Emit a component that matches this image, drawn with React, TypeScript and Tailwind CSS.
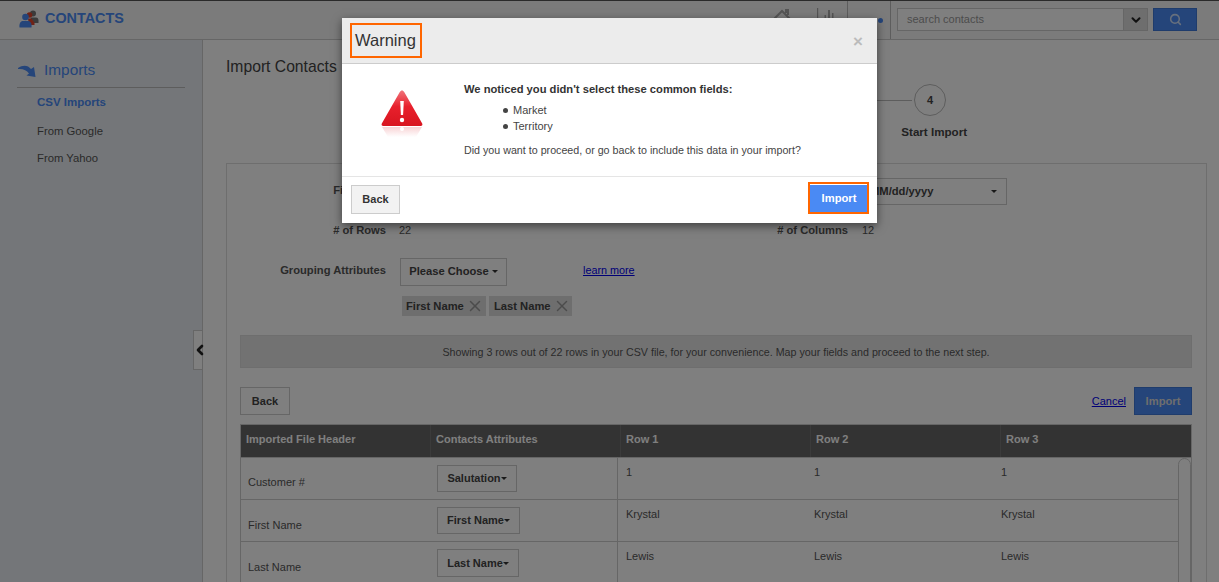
import { ChevronDown, ChevronLeft, Search, X } from "lucide-react";

const rows = [
  { header: "Customer #", attr: "Salutation", width: "w-[80px]", height: "h-[27px]", value: "1", labelTop: "pt-[17px]" },
  { header: "First Name", attr: "First Name", width: "w-[83px]", height: "h-[27px]", value: "Krystal", labelTop: "pt-[18px]" },
  { header: "Last Name", attr: "Last Name", width: "w-[82px]", height: "h-[28px]", value: "Lewis", labelTop: "pt-[18px]" },
];

function Caret() {
  return <span className="inline-block h-0 w-0 border-x-[3px] border-t-[3px] border-x-transparent border-t-[#333]" />;
}

function ContactsLogo() {
  return (
    <svg width="20" height="18" viewBox="0 0 20 18">
      <circle cx="14" cy="3.500" r="3" fill="#777" />
      <path d="M11.500 7.500h5.500c1.500 0 2.500 1 2.500 3v2.500h-5l-2.500-3z" fill="#777" />
      <circle cx="10.500" cy="5" r="2.800" fill="#e0452c" />
      <path d="M9 8.500h3.500l3 4.500v2h-5.500z" fill="#e0452c" />
      <circle cx="6.500" cy="7" r="3.300" fill="#4a8af4" />
      <path d="M0.500 17.500c-0.500-4 1-6.500 3.500-6.500h5c2.500 0 4 2.500 3.500 6.500z" fill="#4a8af4" />
    </svg>
  );
}

function ImportsArrow() {
  return (
    <svg width="19" height="18" viewBox="0 0 19 18">
      <path d="M0 5c5-3.500 10-3 13 1l3-2 1.500 10-9-1.500 2.500-2c-2.500-3.500-6-5-11-4.500z" fill="#4a8af4" />
    </svg>
  );
}

function WarningIcon() {
  return (
    <svg width="42" height="48" viewBox="0 0 42 48">
      <defs>
        <linearGradient id="warnFill" x1="0" y1="0" x2="0" y2="1">
          <stop offset="0" stopColor="#f0737a" />
          <stop offset="0.45" stopColor="#e8202c" />
          <stop offset="1" stopColor="#d81620" />
        </linearGradient>
        <linearGradient id="warnGlow" x1="0" y1="0" x2="0" y2="1">
          <stop offset="0" stopColor="#f8d3d5" />
          <stop offset="1" stopColor="#ffffff" />
        </linearGradient>
      </defs>
      <path d="M21 0.500c1 0 1.600 0.600 2.200 1.600l18 31.500c0.600 1.200 0 2.400-1.500 2.400h-37.400c-1.500 0-2.100-1.200-1.500-2.400l18-31.500c0.600-1 1.200-1.600 2.200-1.600z" fill="url(#warnFill)" />
      <path d="M19.200 11h3.600l-0.700 14h-2.200z" fill="#fff" />
      <circle cx="21" cy="30" r="2.200" fill="#fff" />
      <path d="M1 37h40l-6 10h-28z" fill="url(#warnGlow)" />
      <circle cx="21" cy="39" r="2" fill="#fff" />
    </svg>
  );
}

function HeaderGlyphs() {
  return (
    <div className="flex items-start gap-[24px] pt-[7px]">
      <svg width="18" height="14" viewBox="0 0 18 14">
        <path d="M1 11L9 3l8 8M13 5V2h2v5" fill="none" stroke="#aaa" strokeWidth="2" />
      </svg>
      <svg width="20" height="16" viewBox="0 0 20 16">
        <path d="M2 0h1.200v16H2zM9.500 7h1.500v9H9.500zM13 2h2v14h-2zM17 5h1.500v11H17z" fill="#aaa" />
      </svg>
    </div>
  );
}

export default function App() {
  return (
    <div className="relative h-[582px] w-full overflow-hidden bg-white font-['Liberation_Sans',Arial,sans-serif] text-[11px] text-[#555]">
      <header className="flex h-10 items-stretch border-t border-b border-t-[#555] border-b-[#ccc] bg-[#f7f7f7] pl-[19px]">
        <div className="flex items-center gap-[6px] pb-[3px]">
          <ContactsLogo />
          <span className="text-[14.4px] font-bold text-[#4a8af4]">CONTACTS</span>
        </div>
        <div className="ml-auto flex items-stretch pr-[22px]">
          <HeaderGlyphs />
          <div className="ml-[12px] w-[44px] border-x border-[#bbb] pt-[17px]">
            <div className="ml-[30px] h-[5px] w-[5px] rounded-full bg-[#4a8af4]" />
          </div>
          <div className="ml-[5px] flex items-start pt-[7px]">
            <div className="ml-px flex h-[23px] w-[227px] items-center border border-[#ccc] bg-white pl-[9px] text-[#999]">
              search contacts
            </div>
            <div className="flex h-[23px] w-[24px] items-center justify-center border border-l-0 border-[#ccc] bg-[#ddd]">
              <ChevronDown size={14} strokeWidth={3.500} color="#222" />
            </div>
            <button className="ml-[5px] flex h-[23px] w-[44px] items-center justify-center border border-[#3f78d8] bg-[#4a8af4]">
              <Search size={13} strokeWidth={2.800} color="#cfe0fb" />
            </button>
          </div>
        </div>
      </header>

      <div className="flex h-[542px]">
        <aside className="w-[203px] shrink-0 border-r border-[#ccc] bg-[#e9edf2] pl-[17px] pr-[17px]">
          <div className="flex h-[48px] items-end gap-[7px] border-b border-[#bbb] pb-[6px] pl-px">
            <ImportsArrow />
            <span className="text-[15.4px] leading-[22px] text-[#4a8af4]">Imports</span>
          </div>
          <nav className="pl-[20px] text-[11.3px]">
            <div className="mt-[7px] text-[11.500px] font-bold leading-[14px] text-[#4a8af4]">CSV Imports</div>
            <div className="mt-[15px] leading-[14px]">From Google</div>
            <div className="mt-[13px] leading-[14px]">From Yahoo</div>
          </nav>
        </aside>

        <main className="min-w-0 flex-1 pl-[23px] pr-[12px]">
          <h1 className="mt-[16px] text-[15.7px] font-normal leading-[22px] text-[#444]">Import Contacts</h1>
          <div className="mt-[6px] flex flex-col items-end pr-[240px]">
            <div className="mr-[21px] flex items-center gap-[2px]">
              <div className="h-px w-[60px] bg-[#bbb]" />
              <div className="flex h-[32px] w-[32px] items-center justify-center rounded-full border border-[#bbb] font-bold text-[#444]">
                4
              </div>
            </div>
            <div className="mt-[8px] text-[11.6px] font-bold leading-4 text-[#444]">Start Import</div>
          </div>

          <section className="mt-[23px] h-[500px] border border-[#ddd] pl-[13px] pr-[14px]">
            <div className="mt-[14px] flex h-[27px] items-center">
              <div className="flex w-[460px] items-center pb-[3px]">
                <div className="w-[146px] text-right text-[11.2px] font-bold">File Name</div>
              </div>
              <div className="ml-[157px] flex h-[27px] w-[150px] items-center justify-between border border-[#ccc] pl-[12px] pr-[9px] text-[11.2px] font-bold text-[#444]">
                MM/dd/yyyy
                <Caret />
              </div>
            </div>
            <div className="mt-[17px] flex h-4 items-center">
              <div className="flex w-[460px] items-center">
                <div className="w-[146px] text-right text-[11.2px] font-bold">
                  # of Rows
                </div>
                <div className="ml-[13px]">22</div>
              </div>
              <div className="w-[148px] text-right text-[11.2px] font-bold">
                # of Columns
              </div>
              <div className="ml-[14px]">12</div>
            </div>
            <div className="mt-[20px] flex h-[28px] items-center">
              <div className="w-[146px] pb-[3px] text-right text-[11.2px] font-bold">Grouping Attributes</div>
              <div className="ml-[14px] flex h-[28px] w-[107px] items-center justify-center gap-[3px] border border-[#ccc] pb-[2px] text-[11.2px] font-bold text-[#444]">
                Please Choose
                <Caret />
              </div>
              <a className="ml-[76px] pb-[3px] text-[10.8px] text-[#0000ee] underline">learn more</a>
            </div>
            <div className="ml-[162px] mt-[10px] flex h-[20px] gap-[3px] whitespace-nowrap text-[11.2px] font-bold text-[#444]">
              <div className="flex w-[84px] items-center bg-[#dcdcdc] pl-[4px]">
                First Name
                <X size={18} color="#999" strokeWidth={2} className="ml-[2px] shrink-0" />
              </div>
              <div className="flex w-[83px] items-center bg-[#dcdcdc] pl-[5px]">
                Last Name
                <X size={18} color="#999" strokeWidth={2} className="ml-[2px] shrink-0" />
              </div>
            </div>
            <div className="mt-[19px] flex h-[33px] items-center justify-center border border-[#ddd] bg-[#e5e5e5] pt-px text-[10.7px]">
              Showing 3 rows out of 22 rows in your CSV file, for your convenience. Map your fields and proceed to the next step.
            </div>
            <div className="mt-[19px] flex h-[28px] items-center">
              <button className="h-[28px] w-[50px] border border-[#ccc] font-bold text-[#444]">Back</button>
              <a className="ml-auto text-[#0000ee] underline">Cancel</a>
              <button className="ml-[8px] h-[28px] w-[58px] border border-[#3f78d8] bg-[#4a8af4] text-[11.2px] font-bold text-[#ddd]">
                Import
              </button>
            </div>

            <div className="mt-[9px] border border-[#ccc]">
              <div className="grid h-[32px] grid-cols-[190px_190px_190px_190px_1fr] items-center bg-[#666] font-bold text-white">
                {["Imported File Header", "Contacts Attributes", "Row 1", "Row 2", "Row 3"].map((title) => (
                  <div key={title} className="flex h-full items-center border-r border-[#777] pb-[3px] pl-[5px] last:border-r-0">
                    {title}
                  </div>
                ))}
              </div>
              <div className="flex border-t border-[#ccc]">
                <div className="min-w-0 flex-1">
                  {rows.map((row) => (
                    <div key={row.header} className="grid h-[42px] grid-cols-[190px_187px_188px_187px_1fr] border-b border-[#ccc]">
                      <div className={`pl-[7px] leading-[14px] ${row.labelTop}`}>{row.header}</div>
                      <div className="border-r border-[#ccc] pl-[6px] pt-[7px]">
                        <div className={`flex ${row.height} ${row.width} items-center justify-center border border-[#ccc] font-bold text-[#444]`}>
                          {row.attr}
                          <Caret />
                        </div>
                      </div>
                      <div className="pl-[8px] pt-[7px] leading-[14px]">{row.value}</div>
                      <div className="pl-[8px] pt-[7px] leading-[14px]">{row.value}</div>
                      <div className="pl-[8px] pt-[7px] leading-[14px]">{row.value}</div>
                    </div>
                  ))}
                </div>
                <div className="h-[140px] w-[13px] rounded-t-[7px] border border-[#ccc]" />
              </div>
            </div>
          </section>
        </main>
      </div>

      <button className="absolute left-[193px] top-[330px] flex h-[40px] w-[10px] items-center justify-center border border-[#ccc] bg-white">
        <ChevronLeft size={16} strokeWidth={4} color="#222" className="ml-[3px] shrink-0" />
      </button>

      <div className="absolute inset-0 flex items-start justify-center bg-black/50 pt-[18px]">
        <div className="w-[535px] bg-white text-[#444] shadow-[0_3px_9px_rgba(0,0,0,0.5)]">
          <div className="flex h-[46px] items-center justify-between border-b border-[#ccc] bg-[#ececec] pl-[8px] pr-[14px]">
            <div className="flex h-[35px] w-[72px] items-center border-2 border-[#ff6600] pl-[3px] text-[16.500px] text-[#333]">
              Warning
            </div>
            <span className="pt-px text-[17px] font-bold leading-none text-[#bbb]">×</span>
          </div>
          <div className="flex h-[113px] border-b border-[#e5e5e5]">
            <div className="w-[122px] shrink-0 pl-[39px] pt-[26px]">
              <WarningIcon />
            </div>
            <div className="pt-[17px]">
              <p className="text-[11.2px] font-bold leading-4 text-[#333]">We noticed you didn't select these common fields:</p>
              <ul className="ml-[39px] mt-[5px] leading-4">
                <li className="flex items-center gap-[5px]">
                  <span className="h-[5px] w-[5px] rounded-full bg-[#444]" />
                  Market
                </li>
                <li className="flex items-center gap-[5px]">
                  <span className="h-[5px] w-[5px] rounded-full bg-[#444]" />
                  Territory
                </li>
              </ul>
              <p className="mt-[8px] text-[10.7px] leading-4">Did you want to proceed, or go back to include this data in your import?</p>
            </div>
          </div>
          <div className="flex h-[46px] items-start justify-between pl-[9px] pr-[8px]">
            <button className="mt-[8px] h-[29px] w-[49px] border border-[#ccc] bg-[#f2f2f2] font-bold text-[#333]">Back</button>
            <button className="mt-[5px] h-[32px] w-[61px] border-2 border-[#ff6600] bg-[#4a8af4] pl-px pt-px text-[11.2px] font-bold text-white shadow-[inset_0_1px_0_#fff]">
              Import
            </button>
          </div>
        </div>
      </div>
    </div>
  );
}
